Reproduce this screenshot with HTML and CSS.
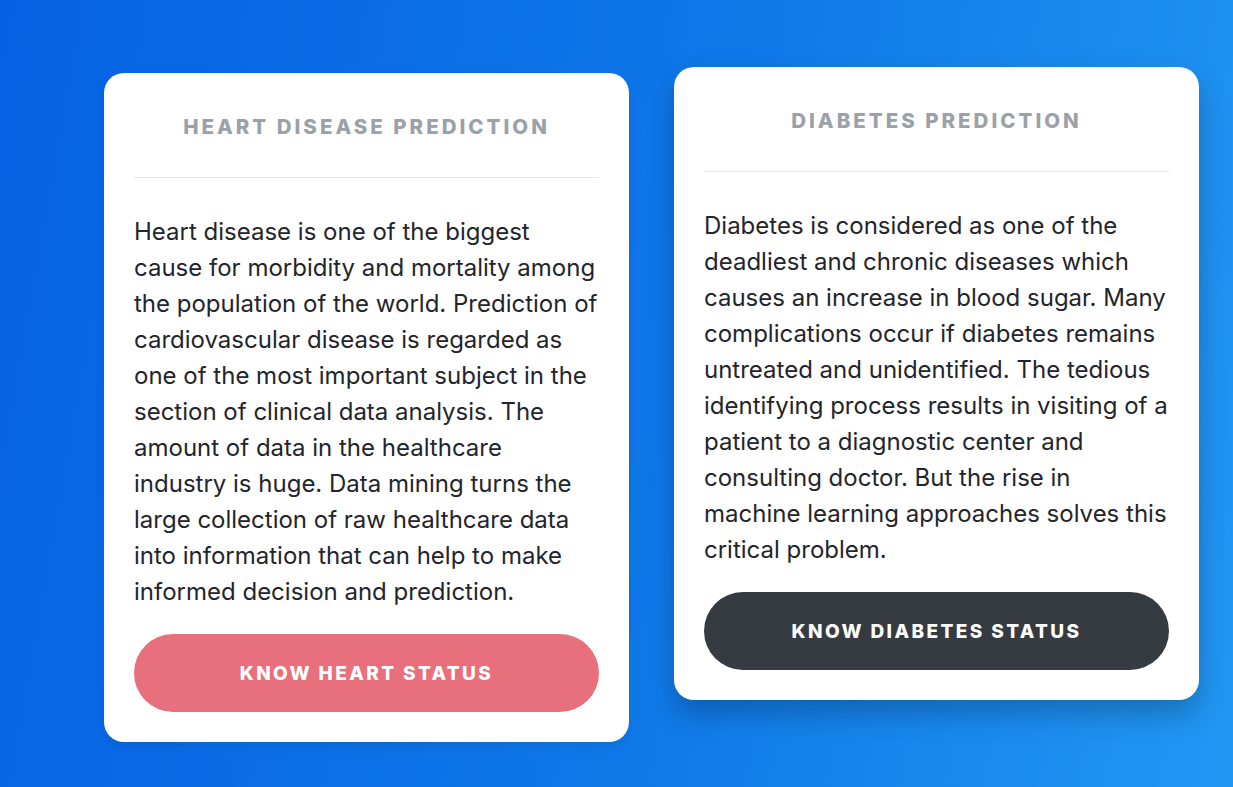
FILE: index.html
```html
<!DOCTYPE html>
<html lang="en">
<head>
<meta charset="utf-8">
<title>Predictions</title>
<link rel="stylesheet" href="styles.css">
</head>
<body>
<main class="page">
  <section class="card">
    <header class="card-head">
      <h2 class="card-title">Heart Disease Prediction</h2>
    </header>
    <p class="card-text">Heart disease is one of the biggest cause for morbidity and mortality among the population of the world. Prediction of cardiovascular disease is regarded as one of the most important subject in the section of clinical data analysis. The amount of data in the healthcare industry is huge. Data mining turns the large collection of raw healthcare data into information that can help to make informed decision and prediction.</p>
    <a class="btn btn-heart" href="#">Know Heart Status</a>
  </section>
  <section class="card card-raised">
    <header class="card-head">
      <h2 class="card-title">Diabetes Prediction</h2>
    </header>
    <p class="card-text">Diabetes is considered as one of the deadliest and chronic diseases which causes an increase in blood sugar. Many complications occur if diabetes remains untreated and unidentified. The tedious identifying process results in visiting of a patient to a diagnostic center and consulting doctor. But the rise in machine learning approaches solves this critical problem.</p>
    <a class="btn btn-dark" href="#">Know Diabetes Status</a>
  </section>
</main>
</body>
</html>
```

FILE: styles.css
```css
* { box-sizing: border-box; }
html, body { margin: 0; padding: 0; }
body {
  font-family: Inter, "Noto Sans", "Liberation Sans", sans-serif;
  background: linear-gradient(100deg, #0562e2 0%, #0f78e9 55%, #2297f3 100%);
  min-height: 787px;
}
.page {
  display: flex;
  align-items: flex-start;
  gap: 45px;
  padding: 73px 0 0 104px;
  min-height: 787px;
}
.card {
  width: 525px;
  background: #fff;
  border-radius: 20px;
  padding: 0 30px 30px;
  box-shadow: 0 4px 10px rgba(0, 0, 0, 0.08);
}
.card-raised {
  transform: translateY(-6px);
  box-shadow: 0 14px 28px rgba(0, 0, 0, 0.24);
}
.card-head {
  padding: 39px 0 35px;
  border-bottom: 1px solid #e4e6e9;
  text-align: center;
}
.card-title {
  margin: 0;
  font-size: 20.5px;
  line-height: 30px;
  font-weight: 800;
  letter-spacing: 3px;
  text-transform: uppercase;
  color: #9ca1a8;
}
.card-text {
  margin: 36px 0 24px;
  font-size: 24px;
  line-height: 36px;
  font-weight: 400;
  color: #23252c;
}
.btn {
  display: flex;
  align-items: center;
  justify-content: center;
  height: 78px;
  border-radius: 39px;
  color: #fff;
  text-decoration: none;
  text-transform: uppercase;
  font-size: 19px;
  font-weight: 800;
  letter-spacing: 2.4px;
}
.btn-heart { background: #e7707c; }
.btn-dark { background: #363a41; }
```
